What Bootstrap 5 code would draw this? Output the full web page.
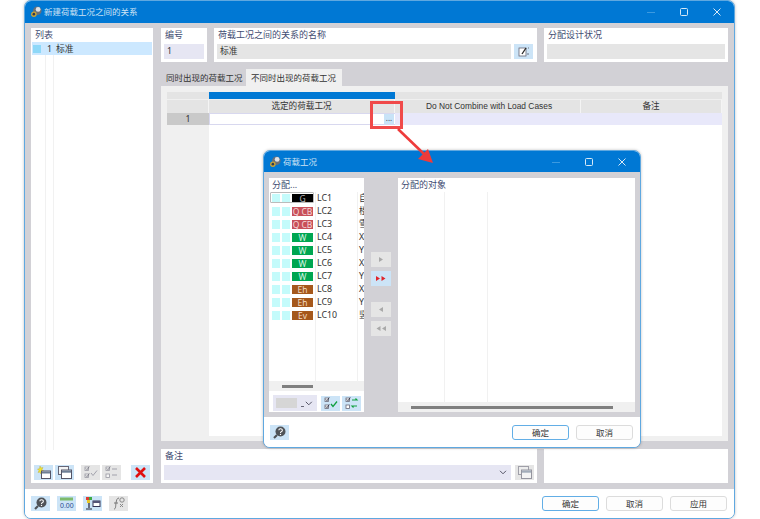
<!DOCTYPE html>
<html lang="zh">
<head>
<meta charset="utf-8">
<title>新建荷载工况之间的关系</title>
<link href="https://cdn.jsdelivr.net/npm/bootstrap@5.3.0/dist/css/bootstrap.min.css" rel="stylesheet">
<style>
html,body{margin:0;height:519px;background:#fff;overflow:hidden}
body{font-family:"Noto Sans","Noto Sans CJK SC","Liberation Sans",sans-serif;font-size:8.8px;line-height:12px;color:#333}
.stage{position:relative;width:760px;height:519px}
.win{background:#fff;border:1px solid #5fa8e0;border-radius:7px;overflow:hidden;box-shadow:0 0 3px rgba(0,0,0,.25)}
.main-win{margin-left:24px;width:711px;height:519px}
.tbar{background:#0078d4;color:#cfe3f5;height:22px;flex:none;font-size:8.5px;padding:0 13px 0 5px}
.tbar .ttl{margin-left:2px}
.winctl{width:74px;justify-content:space-between}
.gbody{background:#d2d1d6}
.m-body{flex:1;min-height:0;padding:5px 6px 6px 6px;gap:8px}
.pane{background:#fff}
.cap{color:#3f4d72;font-size:9px;line-height:12px}
.list-pane{width:122px;flex:none;position:relative;padding-top:1px}
.list-pane .cap{padding:0 4px}
.sel-row{background:#cce8ff;height:13px;margin:0 1px;padding-left:1px;margin-top:1px}
.sel-row .no{margin:0 4px 0 6px}
.swatch{width:8px;height:8px;background:#8ed8f8;flex:none}
.vline{position:absolute;width:1px;background:#f1f1f1}
.right-col{flex:1;min-width:0}
.top-row{gap:7px;height:34px;flex:none}
.f-no{width:46px}.f-name{width:323px}.f-state{width:184px}
.pad{padding:1px 3px 3px}
.pad .cap{padding-left:1px;margin-bottom:3px}
.inp{height:15px;padding-left:3px;line-height:15px;flex:1;min-width:0}
.lav{background:#e6e6f3}.gry{background:#e5e5e5}
.ib{width:19px;height:15px;flex:none;background:#cce4f7;padding:0;border:0}
.ib.off{background:#e5e5e5}
.ib svg{display:block;margin:auto}
.tabrow{height:17px;margin-top:7px;flex:none;font-size:8.5px}
.tabx{padding:0 5px;line-height:17px;width:85px;white-space:nowrap}
.tabx.on{background:#f0f0f0;width:96px}
.tabpane{background:#f0f0f0;height:355px;flex:none;padding:6px 6px 5px;display:flex;flex-direction:column}
.tgrid{display:grid;grid-template-columns:42px 186px 186px 141px;flex:none}
.tgrid>div{text-align:center}
.bar{height:7px;background:#e4e4e4}
.hd{height:14px;background:#e4e4e4;line-height:12px;font-size:8.6px;border-top:1px solid #f0f0f0;border-right:1px solid #f4f4f4}
.hd.latin{font-family:"Liberation Sans",sans-serif;font-size:8.4px;padding-left:3px}
.bar.blue{background:#0078d4}
.rnum{background:#c9c9c9;height:12px;line-height:12px}
.rcell{background:#e8e8fa;height:12px;position:relative}
.rcell.first{background:#fff;border:1px solid #d8d8ef;border-right:0}
.dots{position:absolute;right:1px;top:0;width:10px;height:10px;background:#c8e3f7;line-height:7px;font-size:8px;color:#445}
.t-rest{flex:1;display:flex;min-height:0}
.t-rest i{width:42px;background:#f0f0f0;display:block}
.t-rest b{flex:1;background:#fff;display:block}
.bot-row{gap:7px;height:34px;margin-top:8px;flex:none}
.f-note{width:376px}
.footer{height:29px;flex:none;padding:0 7px 0 6px;background:#fff}
.fbtns{gap:7px}
.wbtn{width:57px;height:15px;padding:0;font-size:8.5px;line-height:13px;background:#fdfdfd;border:1px solid #dcdcdc;border-radius:3px;color:#333}
.wbtn.pri{border-color:#62aee6}
.ibset{gap:7px}
.dlg{position:absolute;left:263px;top:150px;width:378px;height:298px;z-index:3}
.dlg .tbar{height:21px;padding-left:5px;padding-right:14px}
.d-body{flex:1;min-height:0;padding:6px 6px 5px 5px}
.d-left{width:95px;flex:none;position:relative}
.d-left .cap,.d-right .cap{padding:1px 3px 0;height:14px;color:#3f4d72}
.lcrow{height:13px;align-items:center;padding-left:3px;overflow:hidden;white-space:nowrap}
.cy{width:8px;height:9px;background:#c4fbfb;margin-right:2px;flex:none}
.tag{width:21px;height:9px;line-height:9px;text-align:center;color:#f4d9d9;flex:none;font-size:8.5px;margin-right:4px}
.t-g{background:#000;color:#bbb}.t-q{background:#c8505a}.t-w{background:#00a651;color:#d4f3e2}.t-e{background:#a5581c;color:#f3dcc6}
.lcn{width:42px;flex:none}
.d-list{height:190px;position:relative;margin-bottom:0}
.g-frame{position:absolute;left:1px;top:0;width:44px;height:11px;border:1px solid #bbb;border-radius:1px}
.sb{background:#f0f0f0;height:10px;flex:none;display:flex;align-items:center}
.sb u{display:block;height:3px;background:#7f7f7f}
.d-ctrl{padding:4px 3px 1px 4px;gap:4px;align-items:center}
.mini{width:44px;height:16px;padding:0 2px 0 3px;background:#e6e6f3;display:flex;align-items:center;color:#555}
.mini span{width:21px;height:10px;background:#d6d6d6;display:block}
.mini em{width:3px;height:1px;background:#667;margin:6px 0 0 4px;display:block}
.mini svg{margin-left:auto;margin-right:2px}
.d-mid{width:34px;flex:none;align-items:center;padding-top:74px}
.mb{width:20px;height:15px;background:#e5e5e5;border:0;padding:0;display:block;margin-bottom:4px}
.mb.act{background:#cce4f7}
.d-right{width:237px;flex:none;position:relative}
.d-foot{height:30px;flex:none;padding:0 7px 0 6px;background:#fff}
.overlay{position:absolute;left:0;top:0;z-index:4;pointer-events:none}
.defs-holder{position:absolute}
</style>
</head>
<body>
<div class="stage">
<svg width="0" height="0" class="defs-holder">
<defs>
<symbol id="app" viewBox="0 0 14 14">
<circle cx="8.500" cy="5.500" r="5" fill="#6a7079"/><circle cx="9.500" cy="4" r="2.800" fill="#dfe2e6"/><circle cx="4.500" cy="9.500" r="3.200" fill="#c9a437"/><circle cx="4.500" cy="9.500" r="1.500" fill="#2b3a55"/>
</symbol>
<symbol id="help" viewBox="0 0 19 15">
<circle cx="10.500" cy="6.500" r="5" fill="#4f5358"/><path d="M7 10l-3 3" stroke="#4f5358" stroke-width="2.200"/><path d="M8.800 5.200a1.800 1.600 0 1 1 2.400 1.600c-.6.3-.7.6-.7 1.100" fill="none" stroke="#fff" stroke-width="1.100"/><circle cx="10.500" cy="9.400" r=".7" fill="#fff"/>
</symbol>
<symbol id="chk" viewBox="0 0 19 15">
<g fill="#fff" stroke="#667" stroke-width=".8"><rect x="4" y="2" width="3.500" height="3.500"/><rect x="4" y="9" width="3.500" height="3.500"/></g>
<path d="M4.800 3.400l1.200 1.300 2.300-3.200M4.800 10.400l1.200 1.300 2.300-3.200" fill="none" stroke="#334" stroke-width=".9"/>
</symbol>
<symbol id="swp" viewBox="0 0 19 15">
<g fill="#fff" stroke="#667" stroke-width=".8"><rect x="4" y="2" width="3.500" height="3.500"/><rect x="4" y="9" width="3.500" height="3.500"/></g>
<path d="M4.800 3.400l1.200 1.300 2.300-3.200" fill="none" stroke="#334" stroke-width=".9"/>
</symbol>
<symbol id="win2" viewBox="0 0 19 15">
<rect x="3.500" y="1.500" width="10" height="8" fill="#f4f4f4" stroke="#667"/><rect x="6.500" y="5" width="10" height="8.500" fill="#fff" stroke="#556"/><rect x="7" y="5.500" width="9" height="2.200" fill="#6d7f96"/>
</symbol>
</defs>
</svg>

<!-- main window -->
<div class="win main-win d-flex flex-column">
  <div class="tbar d-flex align-items-center justify-content-between">
    <div class="d-flex align-items-center"><svg width="12" height="12"><use href="#app"/></svg><span class="ttl">新建荷载工况之间的关系</span></div>
    <div class="winctl d-flex align-items-center">
      <svg width="8" height="8"><path d="M0 4.500h8" stroke="#3c9ae0"/></svg>
      <svg width="8" height="8"><rect x=".5" y=".5" width="7" height="7" rx="1" fill="none" stroke="#d7e9f7"/></svg>
      <svg width="8" height="8"><path d="M.5.5l7 7M7.500.5l-7 7" stroke="#d7e9f7"/></svg>
    </div>
  </div>
  <div class="gbody m-body d-flex">
    <div class="pane list-pane d-flex flex-column">
      <div class="cap">列表</div>
      <div class="sel-row d-flex align-items-center"><span class="swatch"></span><span class="no">1</span><span>标准</span></div>
      <span class="vline" style="left:14px;top:27px;height:395px"></span>
      <span class="vline" style="left:22px;top:27px;height:395px"></span>
      <div class="mt-auto d-flex" style="padding:0 0 3px 3px;gap:2px">
        <button class="ib"><svg width="19" height="15"><path d="M6 1l1 2 2-.5-1 2 1.500 1.500-2 .3L7 9l-1-2-2 .5 1-2L3.500 4l2-.3z" fill="#f1e234" stroke="#b9a92a" stroke-width=".4"/><rect x="7.500" y="6" width="9" height="7.500" fill="#fff" stroke="#556"/><rect x="8" y="6.500" width="8" height="2" fill="#6d7f96"/></svg></button>
        <button class="ib"><svg width="19" height="15"><use href="#win2"/></svg></button>
        <button class="ib off" style="margin-left:5px"><svg width="19" height="15" opacity=".6"><use href="#chk"/><path d="M10 8l2 2.500 4-5" fill="none" stroke="#778" stroke-width="1"/></svg></button>
        <button class="ib off"><svg width="19" height="15" opacity=".6"><use href="#swp"/><path d="M10 4h5M10 10h5" stroke="#778" stroke-width="1.200"/></svg></button>
        <button class="ib" style="margin-left:8px"><svg width="19" height="15"><path d="M5 3l9 9M14 3l-9 9" stroke="#e01010" stroke-width="2.600"/></svg></button>
      </div>
    </div>
    <div class="right-col d-flex flex-column">
      <div class="top-row d-flex">
        <div class="pane pad f-no d-flex flex-column"><div class="cap">编号</div><div class="d-flex"><div class="inp lav">1</div></div></div>
        <div class="pane pad f-name d-flex flex-column"><div class="cap">荷载工况之间的关系的名称</div><div class="d-flex gap-1" style="padding-right:1px"><div class="inp gry">标准</div><button class="ib" style="margin-left:-1px"><svg width="19" height="15"><rect x="5" y="4" width="7" height="8" fill="#fff" stroke="#667" stroke-width=".8"/><path d="M8 10l4-6" stroke="#222" stroke-width="1.300"/><path d="M13 10h2M14 4h1" stroke="#556" stroke-width=".8"/></svg></button></div></div>
        <div class="pane pad f-state d-flex flex-column"><div class="cap">分配设计状况</div><div class="d-flex"><div class="inp gry"></div></div></div>
      </div>
      <div class="tabrow d-flex">
        <div class="tabx">同时出现的荷载工况</div>
        <div class="tabx on">不同时出现的荷载工况</div>
      </div>
      <div class="tabpane">
        <div class="tgrid">
          <div class="bar"></div><div class="bar blue"></div><div class="bar"></div><div class="bar"></div>
          <div class="hd"></div><div class="hd">选定的荷载工况</div><div class="hd latin">Do Not Combine with Load Cases</div><div class="hd">备注</div>
          <div class="rnum">1</div><div class="rcell first"><span class="dots">...</span></div><div class="rcell"></div><div class="rcell"></div>
        </div>
        <div class="t-rest"><i></i><b></b></div>
      </div>
      <div class="bot-row d-flex">
        <div class="pane pad f-note d-flex flex-column"><div class="cap">备注</div>
          <div class="d-flex align-items-center gap-1"><div class="inp lav d-flex align-items-center justify-content-end pe-1"><svg width="8" height="5"><path d="M1 .8l3 3 3-3" fill="none" stroke="#556" stroke-width="1"/></svg></div><button class="ib off"><svg width="19" height="15" opacity=".55"><use href="#win2"/></svg></button></div>
        </div>
        <div class="pane f-state"></div>
      </div>
    </div>
  </div>
  <div class="footer d-flex align-items-center justify-content-between">
    <div class="d-flex ibset">
      <button class="ib"><svg width="19" height="15"><use href="#help"/></svg></button>
      <button class="ib"><svg width="19" height="15"><rect x="3" y="1.500" width="13" height="3" fill="#7dbb6c"/><text x="3" y="12" font-size="7" font-family="Liberation Sans" fill="#2a4a8a">0.00</text></svg></button>
      <button class="ib"><svg width="19" height="15"><rect x="3" y="1" width="3" height="3" fill="#e03c30"/><rect x="6" y="1" width="3" height="3" fill="#3eaa45"/><rect x="4" y="4" width="3" height="3" fill="#e8c628"/><path d="M6 7v5M3 13h6" stroke="#223" stroke-width="1.200"/><rect x="10" y="5" width="7" height="5.500" fill="#fff" stroke="#335"/><rect x="10" y="5" width="7" height="2" fill="#557"/></svg></button>
      <button class="ib off"><svg width="19" height="15"><path d="M5 13c2 0 1.500-3 2-6s1-5 3-5" fill="none" stroke="#777" stroke-width="1"/><path d="M5 7h4" stroke="#777"/><path d="M11 8l3 3M14 8l-3 3" stroke="#888"/><circle cx="13" cy="4" r="2.200" fill="none" stroke="#888"/></svg></button>
    </div>
    <div class="d-flex fbtns">
      <button class="wbtn pri">确定</button><button class="wbtn">取消</button><button class="wbtn">应用</button>
    </div>
  </div>
</div>

<!-- inner dialog -->
<div class="win dlg d-flex flex-column">
  <div class="tbar d-flex align-items-center justify-content-between">
    <div class="d-flex align-items-center"><svg width="12" height="12"><use href="#app"/></svg><span class="ttl">荷载工况</span></div>
    <div class="winctl d-flex align-items-center">
      <svg width="8" height="8"><path d="M0 4.500h8" stroke="#3c9ae0"/></svg>
      <svg width="8" height="8"><rect x=".5" y=".5" width="7" height="7" rx="1" fill="none" stroke="#d7e9f7"/></svg>
      <svg width="8" height="8"><path d="M.5.5l7 7M7.500.5l-7 7" stroke="#d7e9f7"/></svg>
    </div>
  </div>
  <div class="gbody d-body d-flex">
    <div class="pane d-left d-flex flex-column">
      <div class="cap">分配...</div>
      <div class="d-list">
        <span class="g-frame"></span>
        <span class="vline" style="left:46px;top:0;height:190px"></span>
        <span class="vline" style="left:88px;top:0;height:190px"></span>
        <div class="lcrow d-flex"><span class="cy"></span><span class="cy"></span><span class="tag t-g">G</span><span class="lcn">LC1</span><span>自重</span></div>
        <div class="lcrow d-flex"><span class="cy"></span><span class="cy"></span><span class="tag t-q">Q CB</span><span class="lcn">LC2</span><span>楼面</span></div>
        <div class="lcrow d-flex"><span class="cy"></span><span class="cy"></span><span class="tag t-q">Q CB</span><span class="lcn">LC3</span><span>雪</span></div>
        <div class="lcrow d-flex"><span class="cy"></span><span class="cy"></span><span class="tag t-w">W</span><span class="lcn">LC4</span><span>X</span></div>
        <div class="lcrow d-flex"><span class="cy"></span><span class="cy"></span><span class="tag t-w">W</span><span class="lcn">LC5</span><span>Y</span></div>
        <div class="lcrow d-flex"><span class="cy"></span><span class="cy"></span><span class="tag t-w">W</span><span class="lcn">LC6</span><span>X</span></div>
        <div class="lcrow d-flex"><span class="cy"></span><span class="cy"></span><span class="tag t-w">W</span><span class="lcn">LC7</span><span>Y</span></div>
        <div class="lcrow d-flex"><span class="cy"></span><span class="cy"></span><span class="tag t-e">Eh</span><span class="lcn">LC8</span><span>X</span></div>
        <div class="lcrow d-flex"><span class="cy"></span><span class="cy"></span><span class="tag t-e">Eh</span><span class="lcn">LC9</span><span>Y</span></div>
        <div class="lcrow d-flex"><span class="cy"></span><span class="cy"></span><span class="tag t-e">Ev</span><span class="lcn">LC10</span><span>竖</span></div>
      </div>
      <div class="sb" style="padding-left:13px"><u style="width:31px"></u></div>
      <div class="d-ctrl d-flex">
        <div class="mini"><span></span><em></em><svg width="8" height="5"><path d="M.8.8l3 3 3-3" fill="none" stroke="#556"/></svg></div>
        <button class="ib"><svg width="19" height="15"><use href="#chk"/><path d="M10 8l2 2.500 4-5" fill="none" stroke="#10a040" stroke-width="1.300"/></svg></button>
        <button class="ib" style="margin-left:-2px"><svg width="19" height="15"><use href="#swp"/><path d="M10 4h5l-1.500-1.500M15 10h-5l1.500 1.500" fill="none" stroke="#10a040" stroke-width="1.100"/></svg></button>
      </div>
    </div>
    <div class="d-mid d-flex flex-column">
      <button class="mb"><svg width="20" height="15"><path d="M8 5l4 2.500-4 2.500z" fill="#a9a9a9"/></svg></button>
      <button class="mb act" style="margin-bottom:16px"><svg width="20" height="15"><path d="M5 5l4 2.500-4 2.500zM10.500 5l4 2.500-4 2.500z" fill="#e0252c"/></svg></button>
      <button class="mb"><svg width="20" height="15"><path d="M12 5l-4 2.500 4 2.500z" fill="#a9a9a9"/></svg></button>
      <button class="mb"><svg width="20" height="15"><path d="M9.500 5l-4 2.500 4 2.500zM15 5l-4 2.500 4 2.500z" fill="#a9a9a9"/></svg></button>
    </div>
    <div class="pane d-right d-flex flex-column">
      <div class="cap">分配的对象</div>
      <span class="vline" style="left:46px;top:14px;height:211px"></span>
      <span class="vline" style="left:89px;top:14px;height:211px"></span>
      <div class="sb mt-auto" style="padding-left:13px"><u style="width:202px"></u></div>
    </div>
  </div>
  <div class="d-foot d-flex align-items-center justify-content-between">
    <button class="ib"><svg width="19" height="15"><use href="#help"/></svg></button>
    <div class="d-flex fbtns"><button class="wbtn pri">确定</button><button class="wbtn">取消</button></div>
  </div>
</div>

<!-- callout -->
<svg class="overlay" width="760" height="519">
  <rect x="371.500" y="102.500" width="30" height="25" fill="none" stroke="#f04a4a" stroke-width="3"/>
  <path d="M398 129l26 25" stroke="#ee3b3b" stroke-width="2.600"/>
  <path d="M433 163l-15-4 10-10z" fill="#ee3b3b"/>
</svg>
</div>
</body>
</html>
